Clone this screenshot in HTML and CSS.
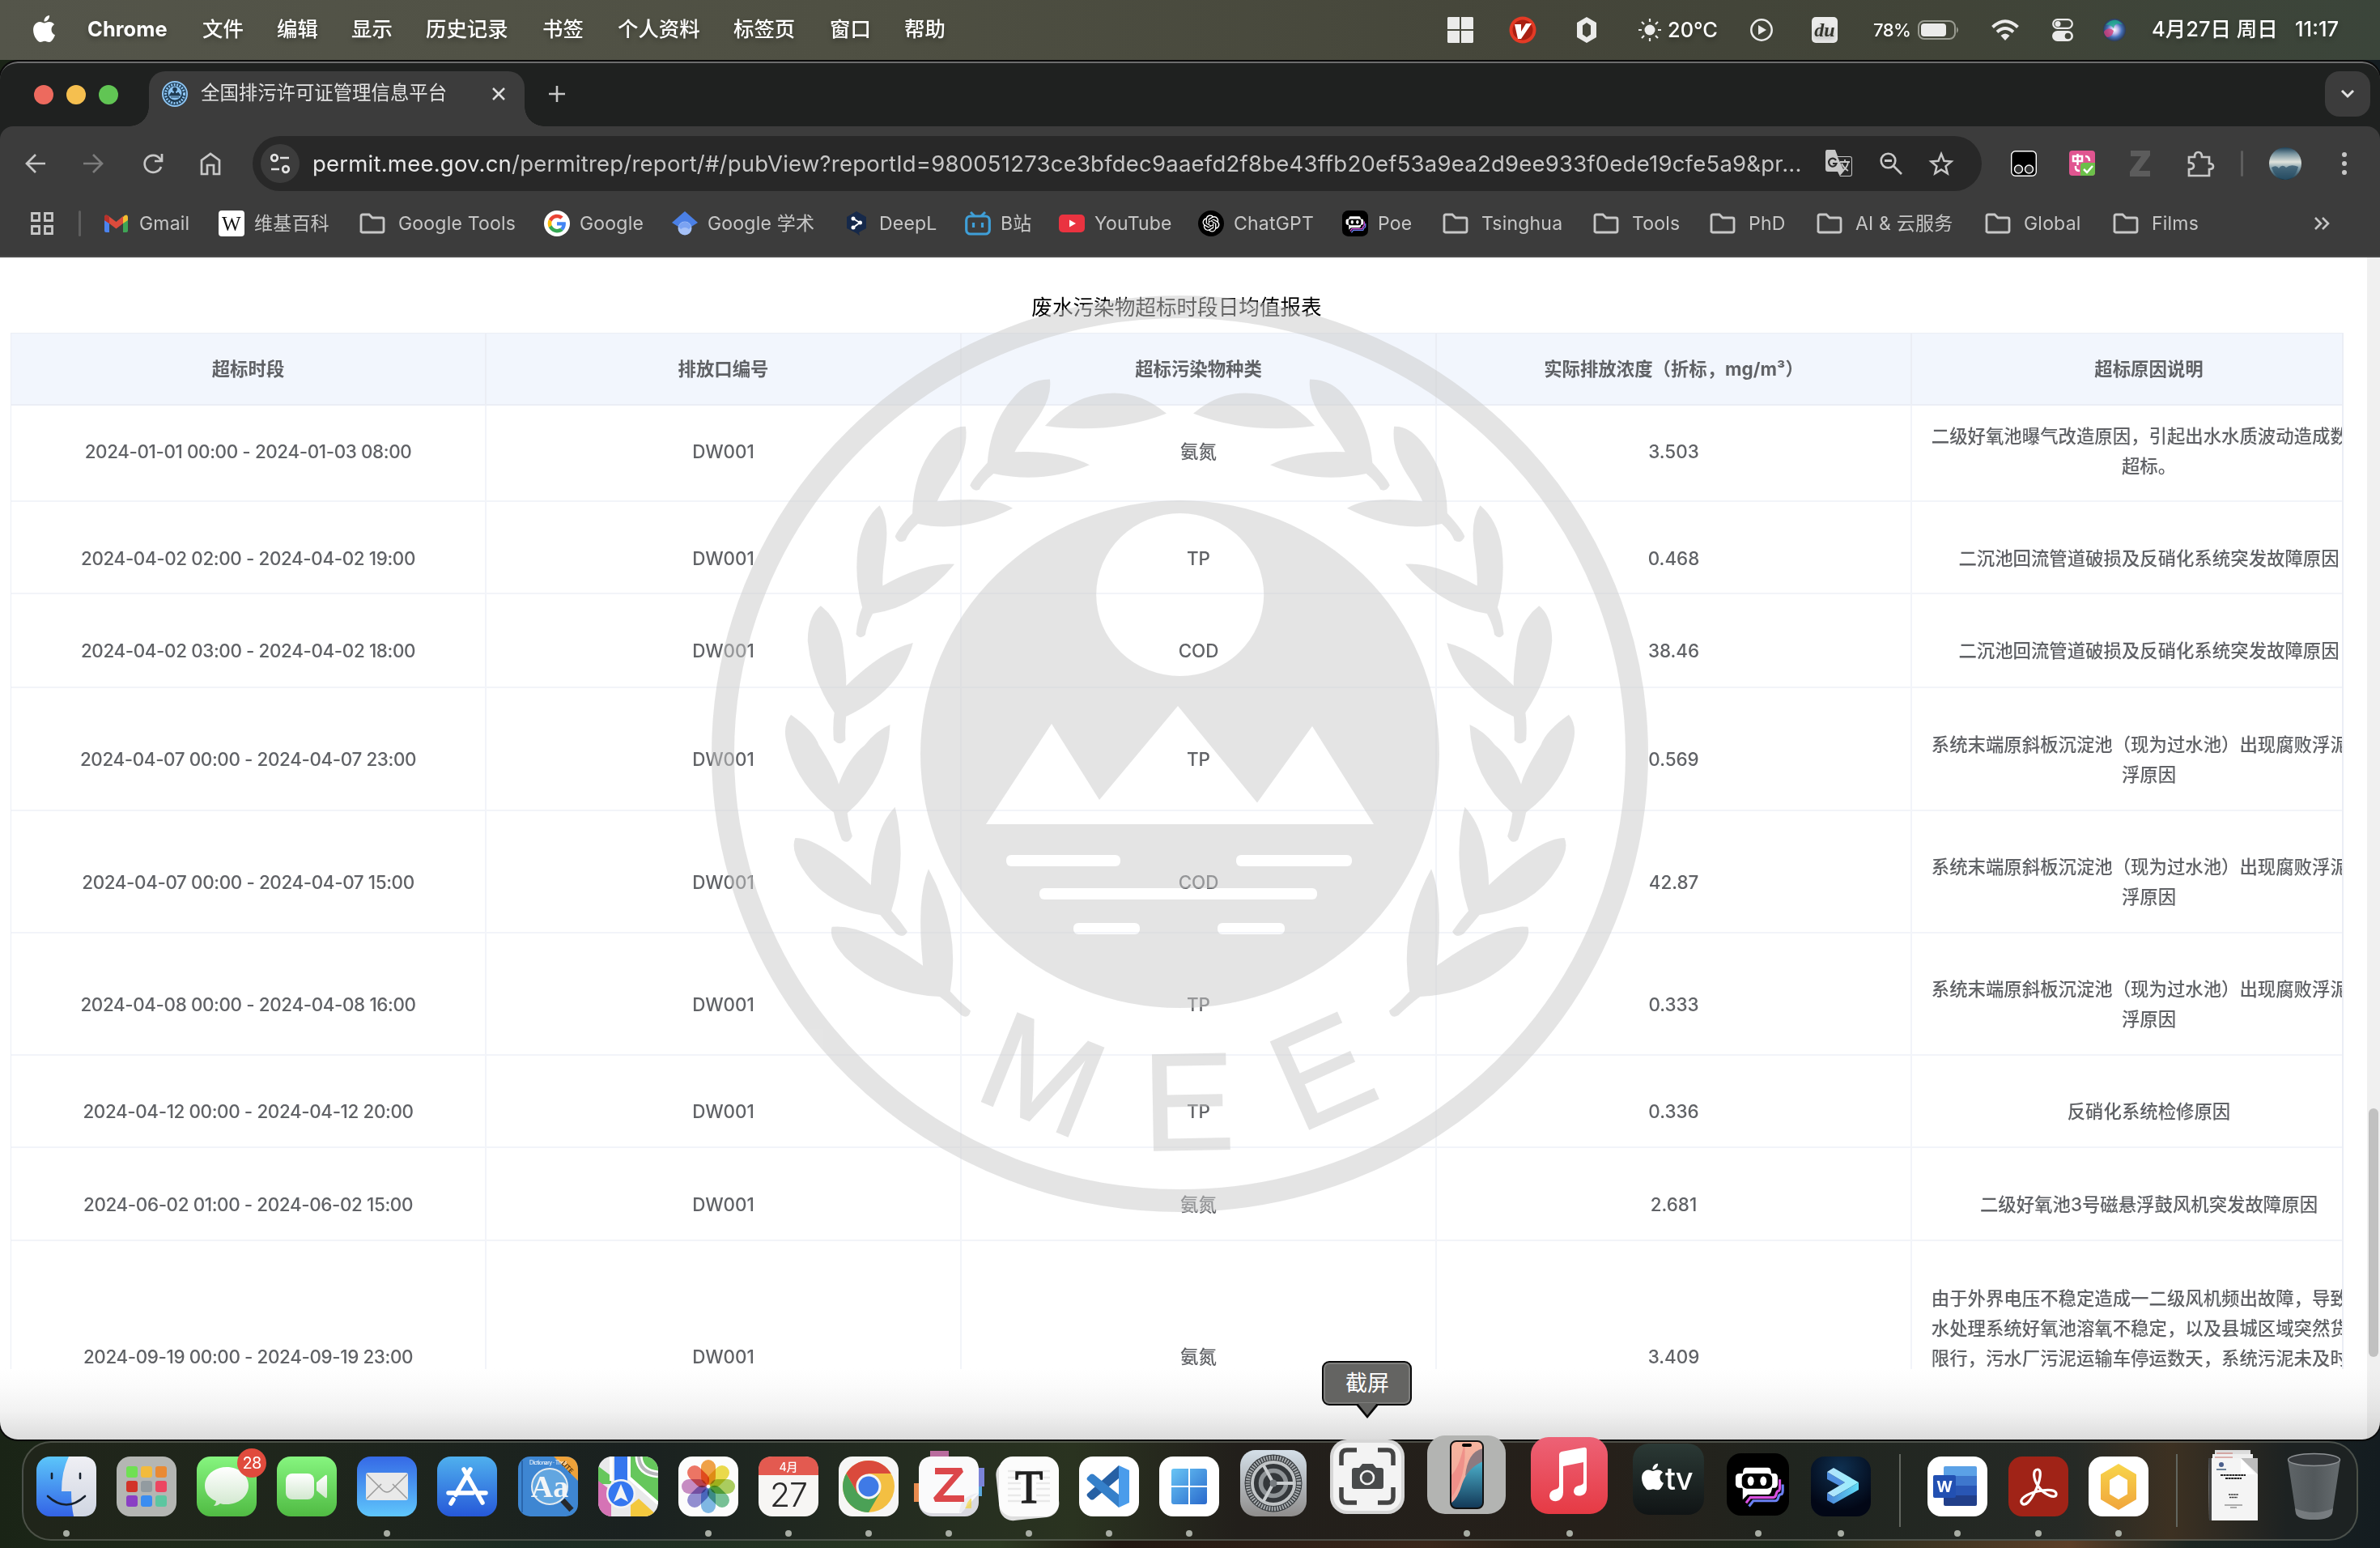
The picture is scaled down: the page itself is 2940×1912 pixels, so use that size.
FILE: index.html
```html
<!DOCTYPE html>
<html lang="zh-CN">
<head>
<meta charset="utf-8">
<title>全国排污许可证管理信息平台</title>
<link rel="stylesheet" href="styles.css">
</head>
<body>
<svg class="defs" width="0" height="0">
  <defs>
    <symbol id="folder" viewBox="0 0 32 32"><path d="M2 27V7q0-2 2-2h8l4 4h12q2 0 2 2v14q0 2-2 2H4q-2 0-2-2z" fill="none" stroke="#c7c7c7" stroke-width="2.8"/></symbol>
    <symbol id="apple" viewBox="0 0 24 24"><path d="M12.152 6.896c-.948 0-2.415-1.078-3.96-1.04-2.04.027-3.91 1.183-4.961 3.014-2.117 3.675-.546 9.103 1.519 12.09 1.013 1.454 2.208 3.09 3.792 3.039 1.52-.065 2.09-.987 3.935-.987 1.831 0 2.35.987 3.96.948 1.637-.026 2.676-1.48 3.676-2.948 1.156-1.688 1.636-3.325 1.662-3.415-.039-.013-3.182-1.221-3.22-4.857-.026-3.04 2.48-4.494 2.597-4.559-1.429-2.09-3.623-2.324-4.39-2.376-2-.156-3.675 1.09-4.61 1.09zM15.53 3.83c.843-1.012 1.4-2.427 1.245-3.83-1.207.052-2.662.805-3.532 1.818-.78.896-1.454 2.338-1.273 3.714 1.338.104 2.715-.688 3.559-1.701"/></symbol>
    <symbol id="poe" viewBox="0 0 74 74"><rect width="74" height="74" rx="17" fill="#000"/><path d="M26.500 63l5-6.500h26q3 0 4-5 1-3 4-3 1-1 1-4V37" fill="none" stroke="#6a80f2" stroke-width="3"/><path d="M23 59l5-6.500h27q3 0 4-5 1-3 3-3 1-1 1-4V31" fill="none" stroke="#d94fe0" stroke-width="3"/><path d="M23 17h26q3 0 3.500 4l.5 3h4q3 0 3.500 4v9q-.5 4-3.500 4h-3l-1 4q-1 4-4 4H25l-6 6v-13l-1-1h-3q-4 0-4.500-4v-9q.5-4 4.500-4h4l.5-3q.5-4 3.500-4z" fill="#fff"/><rect x="18" y="24" width="36" height="18" rx="6" fill="#000"/><ellipse cx="28.500" cy="33" rx="3.800" ry="5.500" fill="#fff"/><ellipse cx="43.500" cy="33" rx="3.800" ry="5.500" fill="#fff"/></symbol>
    <linearGradient id="gGreen" x2="0" y2="1"><stop stop-color="#86f57f"/><stop offset="1" stop-color="#50bb43"/></linearGradient>
    <linearGradient id="gMail" x2="0" y2="1"><stop stop-color="#3569e6"/><stop offset="1" stop-color="#5fc6fb"/></linearGradient>
    <linearGradient id="gStore" x2="0" y2="1"><stop stop-color="#4fb0ee"/><stop offset="1" stop-color="#2658d8"/></linearGradient>
    <linearGradient id="gFinder" x2="0" y2="1"><stop stop-color="#5cc6fa"/><stop offset="1" stop-color="#3363e6"/></linearGradient>
    <linearGradient id="gFace" x2="0" y2="1"><stop stop-color="#efeff4"/><stop offset="1" stop-color="#d0d6e2"/></linearGradient>
    <linearGradient id="gWhite" x2="0" y2="1"><stop stop-color="#fff"/><stop offset="1" stop-color="#d2e8cf"/></linearGradient>
    <linearGradient id="gMusic" x2="0" y2="1"><stop stop-color="#ed6276"/><stop offset="1" stop-color="#e63a44"/></linearGradient>
    <linearGradient id="gWin" x2="1" y2="1"><stop stop-color="#68c5f5"/><stop offset="1" stop-color="#2969cc"/></linearGradient>
    <linearGradient id="gSet" x2="0" y2="1"><stop stop-color="#d4dfe8"/><stop offset="1" stop-color="#8f8d8c"/></linearGradient>
    <linearGradient id="gTv" x2="0" y2="1"><stop stop-color="#2b3935"/><stop offset="1" stop-color="#101415"/></linearGradient>
    <linearGradient id="gSea" x2="0" y2="1"><stop stop-color="#4cb0cb"/><stop offset="1" stop-color="#103352"/></linearGradient>
    <linearGradient id="gCoral" x2="0" y2="1"><stop stop-color="#f6b59f"/><stop offset="1" stop-color="#f0a39b"/></linearGradient>
    <linearGradient id="gHex" x2="0" y2="1"><stop stop-color="#f8d54a"/><stop offset="1" stop-color="#f0a53c"/></linearGradient>
    <linearGradient id="gArrow" x2="1" y2="0"><stop stop-color="#b5e2fb"/><stop offset="1" stop-color="#92f0fd"/></linearGradient>
    <linearGradient id="gEdge" x2="1" y2="0"><stop stop-color="#4a83d8"/><stop offset="1" stop-color="#5fdcf5"/></linearGradient>
    <radialGradient id="gNavy" cx=".5" cy=".2" r=".7"><stop stop-color="#0f3050"/><stop offset="1" stop-color="#020716"/></radialGradient>
    <linearGradient id="gTrash" x2="1" y2="0"><stop stop-color="#5e6467"/><stop offset=".5" stop-color="#52585b"/><stop offset="1" stop-color="#666c6f"/></linearGradient>
    <linearGradient id="gCloud" x2="0" y2="1"><stop stop-color="#1d4159"/><stop offset=".2" stop-color="#7a95a0"/><stop offset=".45" stop-color="#dfe3dc"/><stop offset=".65" stop-color="#7f9daa"/><stop offset="1" stop-color="#12374b"/></linearGradient>
    <radialGradient id="gSiri"><stop stop-color="#fff"/><stop offset=".35" stop-color="#b8b5e8"/><stop offset=".65" stop-color="#4470b8"/><stop offset="1" stop-color="#2b3a58"/></radialGradient>
  </defs>
</svg>

<div class="desktop">
  <header class="menubar">
    <svg class="apple" width="33" height="33"><use href="#apple" fill="#fff"/></svg>
    <b>Chrome</b><span>文件</span><span>编辑</span><span>显示</span><span>历史记录</span><span>书签</span><span>个人资料</span><span>标签页</span><span>窗口</span><span>帮助</span>
    <svg width="32" height="32" viewBox="0 0 32 32"><path d="M1 0h14v15H0V1zM17 0h14l1 1v14H17zM0 17h15v15H1l-1-1zM17 17h15v14l-1 1H17z" fill="#ebebea"/></svg>
    <svg width="34" height="34" viewBox="0 0 34 34"><circle cx="17" cy="17" r="16.5" fill="#e43a25"/><circle cx="17" cy="17" r="12.5" fill="#a81f12"/><path d="M7 10h8l0 9 6-10h7L15 28h-4z" fill="#fff"/></svg>
    <svg width="24" height="32" viewBox="0 0 24 32"><path d="M12 0l12 7v18l-12 7L0 25V7zm0 7L7 10.500v11L12 25l5-3.500v-11z" fill="#ebebea" fill-rule="evenodd"/></svg>
    <div class="weather"><svg width="28" height="28" viewBox="0 0 28 28"><circle cx="14" cy="14" r="6.500" fill="#ebebea"/><path d="M14 0v4M14 24v4M0 14h4M24 14h4M4 4l3 3M21 21l3 3M4 24l3-3M21 7l3-3" stroke="#ebebea" stroke-width="2.200"/></svg><span>20°C</span></div>
    <svg width="28" height="28" viewBox="0 0 28 28"><circle cx="14" cy="14" r="12.700" fill="none" stroke="#ebebea" stroke-width="2.500"/><path d="M10 8l10 6-10 6z" fill="#ebebea"/></svg>
    <svg width="32" height="32" viewBox="0 0 32 32"><rect width="32" height="32" rx="5" fill="#ebebea"/><text x="16" y="24" text-anchor="middle" class="du">du</text></svg>
    <div class="battery"><span>78%</span><svg width="52" height="24" viewBox="0 0 52 24"><rect x="1" y="1" width="45" height="22" rx="7" fill="none" stroke="#999b91" stroke-width="2"/><rect x="4" y="4" width="31" height="16" rx="4" fill="#ebebea"/><path d="M48 8q4 4 0 8z" fill="#999b91"/></svg></div>
    <svg width="34" height="26" viewBox="0 0 34 26"><path d="M1.500 9.500q15.500-14.500 31 0M7 15.500q10-9 20 0" fill="none" stroke="#ebebea" stroke-width="4"/><path d="M11.500 20q5.500-5 11 0L17 26z" fill="#ebebea"/></svg>
    <svg width="26" height="28" viewBox="0 0 26 28"><rect x="1.200" y="1.200" width="23.600" height="10.600" rx="5.300" fill="none" stroke="#ebebea" stroke-width="2.200"/><circle cx="7" cy="6.500" r="3.500" fill="#ebebea"/><rect y="15" width="26" height="13" rx="6.500" fill="#ebebea"/><circle cx="19.500" cy="21.500" r="3.800" fill="#42453a"/></svg>
    <svg width="28" height="28" viewBox="0 0 28 28"><circle cx="14" cy="14" r="14" fill="url(#gSiri)"/><path d="M3 8Q14-4 24 7 14 4 13 12 8 6 3 8z" fill="#1fae8c" opacity=".8"/><path d="M1 16q6-7 12-1-2 8-8 8-4-3-4-7z" fill="#d23d78" opacity=".8"/></svg>
    <span class="date">4月27日 周日</span><span class="clock">11:17</span>
  </header>

  <main class="window">
    <div class="tabstrip">
      <div class="lights"><i class="red"></i><i class="yellow"></i><i class="green"></i></div>
      <div class="tab">
        <svg width="32" height="32" viewBox="0 0 32 32"><circle cx="16" cy="16" r="15" fill="#1f3b52" stroke="#8cc4f2" stroke-width="2"/><circle cx="16" cy="16" r="11.500" fill="none" stroke="#8cc4f2" stroke-width="3" stroke-dasharray="2 1.500"/><circle cx="16" cy="15" r="8.500" fill="#8cc4f2"/><circle cx="16" cy="10.500" r="2.800" fill="#1f3b52"/><path d="M9 18l3-4 2 2 2-3 2 3 2-2 3 4zM11 20h10" fill="#1f3b52" stroke="#1f3b52"/></svg>
        <span>全国排污许可证管理信息平台</span>
        <svg width="16" height="16" viewBox="0 0 16 16"><path d="M1 1l14 14M15 1L1 15" stroke="#dedede" stroke-width="2.500"/></svg>
      </div>
      <svg class="newtab" width="22" height="22" viewBox="0 0 22 22"><path d="M11 1v20M1 11h20" stroke="#c7c7c7" stroke-width="2.600"/></svg>
      <div class="tabsearch"><svg width="18" height="12" viewBox="0 0 18 12"><path d="M2 2l7 7 7-7" fill="none" stroke="#e3e3e3" stroke-width="3"/></svg></div>
    </div>

    <div class="chrome">
      <div class="toolbar">
        <svg width="26" height="26" viewBox="0 0 26 26"><path d="M25 13H3M13 2L2 13l11 11" fill="none" stroke="#c7c7c7" stroke-width="2.700"/></svg>
        <svg width="26" height="26" viewBox="0 0 26 26"><path d="M1 13h22M13 2l11 11-11 11" fill="none" stroke="#7c7c7c" stroke-width="2.700"/></svg>
        <svg width="26" height="26" viewBox="0 0 26 26"><path d="M23 17A10.500 10.500 0 1 1 21.500 7L24 10M24 1v9h-9" fill="none" stroke="#c7c7c7" stroke-width="2.700"/></svg>
        <svg width="26" height="30" viewBox="0 0 26 30"><path d="M2 28V11L13 3l11 8v17h-7V17H9v11z" fill="none" stroke="#c7c7c7" stroke-width="2.700"/></svg>
        <div class="omnibox">
          <div class="siteinfo"><svg width="26" height="26" viewBox="0 0 26 26"><g fill="none" stroke="#e3e3e3" stroke-width="2.700"><circle cx="6" cy="6" r="3.800"/><path d="M13 6h11M2 20h10"/><circle cx="20" cy="20" r="3.800"/></g></svg></div>
          <div class="url"><b>permit.mee.gov.cn</b>/permitrep/report/#/pubView?reportId=980051273ce3bfdec9aaefd2f8be43ffb20ef53a9ea2d9ee933f0ede19cfe5a9&amp;pr...</div>
          <svg width="34" height="34" viewBox="0 0 34 34"><path d="M2 0h10l3 8h15q3 0 3 3v19q0 3-3 3H18l-3-6H3q-3 0-3-3V3q0-3 2-3z" fill="#c7c7c7"/><path d="M15 9h15q2 0 2 2v19q0 2-2 2H18l5-6z" fill="#282828"/><path d="M18 15h12M24 12v3M21 26q6-4 7-11M20 17q3 6 8 9" stroke="#c7c7c7" stroke-width="1.800" fill="none"/><path d="M13 13a4.800 5 0 1 0 .5 4H9" fill="none" stroke="#282828" stroke-width="2.200"/></svg>
          <svg width="28" height="28" viewBox="0 0 28 28"><path d="M17 17l10 10M6 10.500h9" stroke="#c7c7c7" stroke-width="2.800"/><circle cx="10.500" cy="10.500" r="8.800" fill="none" stroke="#c7c7c7" stroke-width="2.600"/></svg>
          <svg width="30" height="30" viewBox="0 0 30 30"><path d="M15 3l3.500 8.700 9 .7-7 6 2.200 8.900L15 22.500l-7.700 4.800 2.200-8.900-7-6 9-.7z" fill="none" stroke="#c7c7c7" stroke-width="2.500"/></svg>
        </div>
        <svg width="32" height="32" viewBox="0 0 32 32"><rect x=".7" y=".7" width="30.600" height="30.600" rx="5" fill="#000" stroke="#fff" stroke-width="1.400"/><circle cx="9.500" cy="23" r="5" fill="#333" stroke="#fff" stroke-width="1.500"/><circle cx="22.500" cy="23" r="5" fill="#333" stroke="#fff" stroke-width="1.500"/></svg>
        <svg width="32" height="32" viewBox="0 0 32 32"><rect width="32" height="31" rx="4" fill="#e05590"/><path d="M5 7h11v6H5zM10.500 4v14M20 7q5 0 5 6M8 19v2q0 4 5 4" fill="none" stroke="#fff" stroke-width="2.500"/><path d="M14 19q0-4 4-4h14v12q0 4-4 4H14z" fill="#6cc04a"/><path d="M18 23l4 4 7-8" stroke="#fff" stroke-width="2.500" fill="none"/></svg>
        <svg width="26" height="32" viewBox="0 0 26 32"><path d="M1 0h24v6L11 25h14v7H0v-6L14 7H1z" fill="#5c5c5c"/></svg>
        <svg width="33" height="33" viewBox="0 0 33 33"><path d="M2 8h7q0-6 4.500-6T18 8h9v8q5 0 5 3.500T27 23v8H2v-8q6 0 6-4t-6-4z" fill="none" stroke="#c7c7c7" stroke-width="2.700"/></svg>
        <i class="sep"></i>
        <svg width="40" height="40" viewBox="0 0 40 40"><circle cx="20" cy="20" r="20" fill="url(#gCloud)"/><path d="M3 25q6-4 9 1 4-6 9-1 6-5 15-1-3 14-16 16Q7 38 3 25z" fill="#2c5268" opacity=".75"/></svg>
        <svg width="6" height="30" viewBox="0 0 6 30"><g fill="#c7c7c7"><circle cx="3" cy="4" r="3"/><circle cx="3" cy="15" r="3"/><circle cx="3" cy="26" r="3"/></g></svg>
      </div>
      <nav class="bookmarks">
        <svg width="28" height="28" viewBox="0 0 28 28"><g fill="none" stroke="#c7c7c7" stroke-width="2.800"><path d="M1.500 1.500h9v9h-9zM17.500 1.500h9v9h-9zM1.500 17.500h9v9h-9zM17.500 17.500h9v9h-9z"/></g></svg>
        <i class="sep"></i>
        <a><svg width="32" height="32" viewBox="0 0 32 32"><path d="M1 9v16q0 2 2 2h4V13z" fill="#4b83ee"/><path d="M30 9v16q0 2-2 2h-4V13z" fill="#3fa556"/><path d="M24 8l2-2q4-2 4 3v3l-6 4z" fill="#f3bd31"/><path d="M1 12V9q0-5 4-3l10.500 8L24 7v9l-8.500 6.500L7 16z" fill="#dc4b3c"/><path d="M1 12V9q0-4 4-3l2 2v8z" fill="#b8302a"/></svg>Gmail</a>
        <a><svg width="32" height="32" viewBox="0 0 32 32"><rect width="32" height="32" rx="4" fill="#fff"/><text x="16" y="25" text-anchor="middle" class="wiki">W</text></svg>维基百科</a>
        <a class="f"><svg width="32" height="32"><use href="#folder"/></svg>Google Tools</a>
        <a><svg width="32" height="32" viewBox="0 0 48 48"><circle cx="24" cy="24" r="24" fill="#fff"/><g transform="translate(7 7) scale(.71)"><path fill="#EA4335" d="M24 9.500c3.540 0 6.710 1.220 9.210 3.600l6.850-6.850C35.900 2.380 30.470 0 24 0 14.620 0 6.510 5.380 2.560 13.220l7.980 6.190C12.430 13.720 17.740 9.500 24 9.500z"/><path fill="#4285F4" d="M46.980 24.550c0-1.570-.15-3.090-.38-4.550H24v9.020h12.940c-.58 2.960-2.260 5.480-4.780 7.180l7.730 6c4.510-4.180 7.090-10.360 7.090-17.650z"/><path fill="#FBBC05" d="M10.530 28.590c-.48-1.450-.76-2.990-.76-4.590s.27-3.140.76-4.590l-7.980-6.190C.92 16.460 0 20.120 0 24c0 3.880.92 7.540 2.560 10.780l7.970-6.190z"/><path fill="#34A853" d="M24 48c6.480 0 11.930-2.130 15.890-5.810l-7.730-6c-2.150 1.450-4.920 2.300-8.160 2.300-6.260 0-11.570-4.220-13.470-9.910l-7.980 6.190C6.510 42.620 14.620 48 24 48z"/></g></svg>Google</a>
        <a><svg width="32" height="32" viewBox="0 0 32 32"><path d="M16 1L0 15l8 5h16l8-5z" fill="#4b80e6"/><circle cx="16" cy="22" r="8.500" fill="#a5c1f8"/><path d="M8 20q3-6 8-6t8 6l-3 3q-5-4-10 0z" fill="#7ba3f2"/></svg>Google 学术</a>
        <a><svg width="32" height="32" viewBox="0 0 32 32"><path d="M16 1l12 7v14l-9 5 1 4-4-3L4 22V8z" fill="#16294a"/><path d="M12 10l8 5-8 6" fill="none" stroke="#fff" stroke-width="2"/><circle cx="12" cy="10" r="2.500" fill="#fff"/><circle cx="20.500" cy="15" r="2.500" fill="#fff"/><circle cx="12" cy="21" r="2.500" fill="#fff"/></svg>DeepL</a>
        <a><svg width="32" height="32" viewBox="0 0 32 32"><rect x="1.700" y="7" width="28.600" height="22" rx="5" fill="none" stroke="#3f9fd8" stroke-width="3.200"/><path d="M7 2l5 5M25 2l-5 5" stroke="#3f9fd8" stroke-width="3"/><path d="M10.500 15v6M21.500 15v6" stroke="#3f9fd8" stroke-width="3.200"/></svg>B站</a>
        <a><svg width="32" height="32" viewBox="0 0 32 32"><rect y="5" width="32" height="22" rx="5" fill="#ea3340"/><path d="M13 11.500l8 4.500-8 4.500z" fill="#fff"/></svg>YouTube</a>
        <a><svg width="32" height="32" viewBox="0 0 32 32"><circle cx="16" cy="16" r="16" fill="#000"/><path transform="translate(5.500 5.500) scale(.875)" fill="#fff" d="M22.2819 9.8211a5.9847 5.9847 0 0 0-.5157-4.9108 6.0462 6.0462 0 0 0-6.5098-2.9A6.0651 6.0651 0 0 0 4.9807 4.1818a5.9847 5.9847 0 0 0-3.9977 2.9 6.0462 6.0462 0 0 0 .7427 7.0966 5.98 5.98 0 0 0 .511 4.9107 6.051 6.051 0 0 0 6.5146 2.9001A5.9847 5.9847 0 0 0 13.2599 24a6.0557 6.0557 0 0 0 5.7718-4.2058 5.9894 5.9894 0 0 0 3.9977-2.9001 6.0557 6.0557 0 0 0-.7475-7.0729zm-9.022 12.6081a4.4755 4.4755 0 0 1-2.8764-1.0408l.1419-.0804 4.7783-2.7582a.7948.7948 0 0 0 .3927-.6813v-6.7369l2.02 1.1686a.071.071 0 0 1 .038.052v5.5826a4.504 4.504 0 0 1-4.4945 4.4944zm-9.6607-4.1254a4.4708 4.4708 0 0 1-.5346-3.0137l.142.0852 4.783 2.7582a.7712.7712 0 0 0 .7806 0l5.8428-3.3685v2.3324a.0804.0804 0 0 1-.0332.0615L9.74 19.9502a4.4992 4.4992 0 0 1-6.1408-1.6464zM2.3408 7.8956a4.485 4.485 0 0 1 2.3655-1.9728V11.6a.7664.7664 0 0 0 .3879.6765l5.8144 3.3543-2.0201 1.1685a.0757.0757 0 0 1-.071 0l-4.8303-2.7865A4.504 4.504 0 0 1 2.3408 7.872zm16.5963 3.8558L13.1038 8.364 15.1192 7.2a.0757.0757 0 0 1 .071 0l4.8303 2.7913a4.4944 4.4944 0 0 1-.6765 8.1042v-5.6772a.79.79 0 0 0-.407-.667zm2.0107-3.0231l-.142-.0852-4.7735-2.7818a.7759.7759 0 0 0-.7854 0L9.409 9.2297V6.8974a.0662.0662 0 0 1 .0284-.0615l4.8303-2.7866a4.4992 4.4992 0 0 1 6.6802 4.66zM8.3065 12.863l-2.02-1.1638a.0804.0804 0 0 1-.038-.0567V6.0742a4.4992 4.4992 0 0 1 7.3757-3.4537l-.142.0805L8.704 5.459a.7948.7948 0 0 0-.3927.6813zm1.0976-2.3654l2.602-1.4998 2.6069 1.4998v2.9994l-2.5974 1.4997-2.6067-1.4997Z"/></svg>ChatGPT</a>
        <a><svg width="32" height="32"><use href="#poe"/></svg>Poe</a>
        <a class="f"><svg width="32" height="32"><use href="#folder"/></svg>Tsinghua</a>
        <a class="f"><svg width="32" height="32"><use href="#folder"/></svg>Tools</a>
        <a class="f"><svg width="32" height="32"><use href="#folder"/></svg>PhD</a>
        <a class="f"><svg width="32" height="32"><use href="#folder"/></svg>AI &amp; 云服务</a>
        <a class="f"><svg width="32" height="32"><use href="#folder"/></svg>Global</a>
        <a class="f"><svg width="32" height="32"><use href="#folder"/></svg>Films</a>
        <svg width="20" height="18" viewBox="0 0 20 18"><path d="M2 2l7 7-7 7M11 2l7 7-7 7" fill="none" stroke="#c7c7c7" stroke-width="2.600"/></svg>
      </nav>
    </div>

    <section class="page">
      <div class="report">
        <h1>废水污染物超标时段日均值报表</h1>
        <div class="tablebox">
          <table>
            <thead><tr><th>超标时段</th><th>排放口编号</th><th>超标污染物种类</th><th>实际排放浓度（折标，mg/m³）</th><th>超标原因说明</th></tr></thead>
            <tbody>
              <tr class="first"><td>2024-01-01 00:00 - 2024-01-03 08:00</td><td>DW001</td><td>氨氮</td><td>3.503</td><td>二级好氧池曝气改造原因，引起出水水质波动造成数据<br>超标。</td></tr>
              <tr class="one"><td>2024-04-02 02:00 - 2024-04-02 19:00</td><td>DW001</td><td>TP</td><td>0.468</td><td>二沉池回流管道破损及反硝化系统突发故障原因</td></tr>
              <tr class="one tall"><td>2024-04-02 03:00 - 2024-04-02 18:00</td><td>DW001</td><td>COD</td><td>38.46</td><td>二沉池回流管道破损及反硝化系统突发故障原因</td></tr>
              <tr class="two tall"><td>2024-04-07 00:00 - 2024-04-07 23:00</td><td>DW001</td><td>TP</td><td>0.569</td><td>系统末端原斜板沉淀池（现为过水池）出现腐败浮泥上<br>浮原因</td></tr>
              <tr class="two"><td>2024-04-07 00:00 - 2024-04-07 15:00</td><td>DW001</td><td>COD</td><td>42.87</td><td>系统末端原斜板沉淀池（现为过水池）出现腐败浮泥上<br>浮原因</td></tr>
              <tr class="two"><td>2024-04-08 00:00 - 2024-04-08 16:00</td><td>DW001</td><td>TP</td><td>0.333</td><td>系统末端原斜板沉淀池（现为过水池）出现腐败浮泥上<br>浮原因</td></tr>
              <tr class="one"><td>2024-04-12 00:00 - 2024-04-12 20:00</td><td>DW001</td><td>TP</td><td>0.336</td><td>反硝化系统检修原因</td></tr>
              <tr class="one tall"><td>2024-06-02 01:00 - 2024-06-02 15:00</td><td>DW001</td><td>氨氮</td><td>2.681</td><td>二级好氧池3号磁悬浮鼓风机突发故障原因</td></tr>
              <tr class="many"><td>2024-09-19 00:00 - 2024-09-19 23:00</td><td>DW001</td><td>氨氮</td><td>3.409</td><td class="reason">由于外界电压不稳定造成一二级风机频出故障，导致污<br>水处理系统好氧池溶氧不稳定，以及县城区域突然货车<br>限行，污水厂污泥运输车停运数天，系统污泥未及时外</td></tr>
            </tbody>
          </table>
        </div>
      </div>
      <svg class="emblem" width="1160" height="1136" viewBox="878 364 1160 1136">
        <mask id="scene">
          <rect x="1100" y="600" width="720" height="680" fill="#fff"/>
          <ellipse cx="1457.700" cy="734.500" rx="103.500" ry="100.500" fill="#000"/>
          <path d="M1218 1018l81-124 59 94 97-116 98 119.500 68-94.500 76 121z" fill="#000"/>
          <g fill="#000"><rect x="1243" y="1056" width="141" height="14" rx="6"/><rect x="1527" y="1056" width="143" height="14" rx="6"/><rect x="1284" y="1097" width="343" height="14" rx="6"/><rect x="1326" y="1140" width="82" height="14" rx="6"/><rect x="1504" y="1140" width="83" height="14" rx="6"/></g>
        </mask>
        <g opacity=".5" fill="#cbcbcb">
          <ellipse cx="1457.500" cy="931" rx="564.500" ry="552" fill="none" stroke="#cbcbcb" stroke-width="28"/>
          <ellipse cx="1457.500" cy="931.500" rx="320.500" ry="313.500" mask="url(#scene)"/>
          <g transform="translate(860 340) scale(.7653 .3827)">
            <g id="wreath">
              <path d="M563 486Q610 380 675 380 720 380 759 446 670 515 563 486z"/>
              <path d="M571 336Q575 400 545 478 522 540 514 570 590 565 635 612 560 675 480 640 462 670 457 692 448 700 442 678 445 660 470 605 475 480 510 400 535 335 571 336z"/>
              <path d="M435 488Q440 560 415 640 395 700 389 730 480 710 511 752 430 835 358 802 342 830 338 855 326 870 321 843 325 820 349 768 350 640 385 550 410 485 435 488z"/>
              <path d="M296 743Q312 790 306 880 300 960 301 1002 370 925 417 932 360 1070 285 1092 275 1130 273 1160 265 1178 258 1158 260 1110 268 1072 255 980 261 880 268 790 296 743z"/>
              <path d="M201 1067Q235 1120 238 1220 243 1290 242 1325 300 1210 350 1186 330 1340 242 1424 240 1460 241 1500 232 1522 222 1500 220 1450 223 1412 185 1300 180 1180 180 1100 201 1067z"/>
              <path d="M153 1418Q190 1470 198 1516 225 1600 230 1643 245 1560 272 1516 290 1470 313 1450 310 1620 244 1736 247 1780 252 1810 245 1840 235 1822 225 1770 222 1734 160 1640 145 1500 140 1450 153 1418z"/>
              <path d="M160 1816Q200 1815 282 1968 285 1790 321 1716 342 1890 315 2051 330 2085 341 2118 335 2142 323 2126 308 2090 297 2064 210 2040 170 1910 152 1850 160 1816z"/>
              <path d="M219 2103Q270 2090 366 2228 355 2010 375 1916 428 2110 410 2311 425 2345 443 2374 440 2402 428 2388 408 2350 393 2328 300 2320 240 2200 213 2140 219 2103z"/>
            </g>
            <use href="#wreath" transform="translate(1561.500 0) scale(-1 1)"/>
          </g>
          <g class="mee" text-anchor="middle">
            <text transform="translate(1266 1382) rotate(22)">M</text>
            <text transform="translate(1469 1420) rotate(-1)">E</text>
            <text transform="translate(1657 1377) rotate(-24)">E</text>
          </g>
        </g>
      </svg>
      <div class="scrollbar"><i></i></div>
    </section>
  </main>

  <footer class="dock">
    <div class="app run"><svg viewBox="0 0 74 74"><rect width="74" height="74" rx="17" fill="url(#gFinder)"/><path d="M40 0h17q17 0 17 17v40q0 17-17 17H46q-3-14-3-31H31Q31 18 40 0z" fill="url(#gFace)"/><path d="M19 21v6M54 21v6M14 49q23 21 46 0" fill="none" stroke="#16202c" stroke-width="2.600" stroke-linecap="round"/></svg></div>
    <div class="app"><svg viewBox="0 0 74 74"><rect width="74" height="74" rx="17" fill="#b4b6b3"/><rect x="12" y="12" width="14" height="14" rx="3" fill="#6fe053"/><rect x="30" y="12" width="14" height="14" rx="3" fill="#f2bb3d"/><rect x="48" y="12" width="14" height="14" rx="3" fill="#e98a33"/><rect x="12" y="30" width="14" height="14" rx="3" fill="#d23429"/><rect x="30" y="30" width="14" height="14" rx="3" fill="#929ba0"/><rect x="48" y="30" width="14" height="14" rx="3" fill="#ec4761"/><rect x="12" y="48" width="14" height="14" rx="3" fill="#8a3fc4"/><rect x="30" y="48" width="14" height="14" rx="3" fill="#3b8df0"/><rect x="48" y="48" width="14" height="14" rx="3" fill="#5cc6a0"/></svg></div>
    <div class="app"><svg viewBox="0 0 74 74"><rect width="74" height="74" rx="17" fill="url(#gGreen)"/><path d="M37 13c15 0 27 10 27 23S52 59 37 59c-3 0-6 0-8-1q-3 3-8 3 3-3 3-6C15 51 10 45 10 36c0-13 12-23 27-23z" fill="url(#gWhite)"/></svg><span class="badge">28</span></div>
    <div class="app"><svg viewBox="0 0 74 74"><rect width="74" height="74" rx="17" fill="url(#gGreen)"/><rect x="11" y="21" width="35" height="32" rx="8" fill="url(#gWhite)"/><path d="M49 32l11-9q2-1 2 2v24q0 3-2 2l-11-9z" fill="url(#gWhite)"/></svg></div>
    <div class="app run"><svg viewBox="0 0 74 74"><rect width="74" height="74" rx="17" fill="url(#gMail)"/><rect x="11" y="20" width="52" height="34" rx="3" fill="#e9e9e9"/><path d="M12 52l18-18M62 52L44 34M12 22l20 20q5 4 10 0l20-20" fill="none" stroke="#9a9a9a" stroke-width="1.500"/></svg></div>
    <div class="app"><svg viewBox="0 0 74 74"><rect width="74" height="74" rx="17" fill="url(#gStore)"/><path d="M41 16L23 47M33 16l23 41M14 45h30M52 45h8M20 53l-3 5" stroke="#fff" stroke-width="5.500" stroke-linecap="round"/></svg></div>
    <div class="app"><svg viewBox="0 0 74 74"><rect width="74" height="74" rx="15" fill="#3e86d2"/><path d="M5 5v64" stroke="#2a66ac" stroke-width="2"/><path d="M44 0h13q17 0 17 17v13z" fill="#eea23a"/><text x="14" y="10" class="tiny">Dictionary · Thes</text><text class="lite" transform="translate(53 9) rotate(46)">LITE</text><circle cx="39" cy="37" r="22" fill="#62a6e0" stroke="#e4ebf0" stroke-width="2"/><text x="39" y="50" text-anchor="middle" class="aa">Aa</text><path d="M55 54l11 12" stroke="#26282b" stroke-width="7"/></svg></div>
    <div class="app"><svg viewBox="0 0 74 74"><clipPath id="mapClip"><rect width="74" height="74" rx="17"/></clipPath><g clip-path="url(#mapClip)"><rect width="74" height="74" fill="#e9e9ea"/><path d="M36 0h38v56L36 26z" fill="#66c75c"/><path d="M0 12l16 12v10H0z" fill="#66c75c"/><path d="M0 30l16 12v32H0z" fill="#d573b5"/><path d="M40 74V60l10-8 24 22z" fill="#f3c83e"/><path d="M74 22Q50 20 50-2" fill="none" stroke="#fff" stroke-width="9"/><path d="M74 22Q50 20 50-2" fill="none" stroke="#b7b7bb" stroke-width="4"/><path d="M20 0h16v36H20z" fill="#3576ee"/><path d="M16 0v30M38 0v26l36 32" stroke="#fff" stroke-width="4" fill="none"/><circle cx="28" cy="46" r="18" fill="#f4f4f4"/><circle cx="28" cy="46" r="15.500" fill="#3577f0"/><path d="M28 34l9 22-9-5-9 5z" fill="#f4f4f4"/></g></svg></div>
    <div class="app run"><svg viewBox="0 0 74 74"><rect width="74" height="74" rx="17" fill="#fcfcfc"/><g class="petals"><rect x="28" y="4" width="18" height="31" rx="9" fill="#f19b38"/><rect x="28" y="4" width="18" height="31" rx="9" fill="#ecd93c" transform="rotate(45 37 37)"/><rect x="28" y="4" width="18" height="31" rx="9" fill="#a5cb52" transform="rotate(90 37 37)"/><rect x="28" y="4" width="18" height="31" rx="9" fill="#6cbe8e" transform="rotate(135 37 37)"/><rect x="28" y="4" width="18" height="31" rx="9" fill="#76b3e4" transform="rotate(180 37 37)"/><rect x="28" y="4" width="18" height="31" rx="9" fill="#8b87cf" transform="rotate(225 37 37)"/><rect x="28" y="4" width="18" height="31" rx="9" fill="#c584c0" transform="rotate(270 37 37)"/><rect x="28" y="4" width="18" height="31" rx="9" fill="#ee6a58" transform="rotate(315 37 37)"/></g></svg></div>
    <div class="app run"><svg viewBox="0 0 74 74"><rect width="74" height="74" rx="17" fill="#f7f6f4"/><path d="M0 23v-6Q0 0 17 0h40q17 0 17 17v6z" fill="#e35a50"/><text x="37" y="18" text-anchor="middle" class="calm">4月</text><text x="37" y="62" text-anchor="middle" class="cald">27</text></svg></div>
    <div class="app run"><svg viewBox="0 0 74 74"><rect width="74" height="74" rx="17" fill="#f6f6f5"/><circle cx="37" cy="37" r="32" fill="#f3bf42"/><path d="M9.300 21A32 32 0 0 1 64.700 21H37L23 45z" fill="#da4a3c"/><path d="M9.300 21A32 32 0 0 0 37 69l14-24-14 8-14-8z" fill="#4ba156"/><circle cx="37" cy="37" r="15.500" fill="#f6f6f5"/><circle cx="37" cy="37" r="12.500" fill="#3f7ae6"/></svg></div>
    <div class="app run"><svg viewBox="0 0 74 74"><path d="M-6 33h8v23h-8z" fill="#e88b4e"/><path d="M14-7h23V4H14z" fill="#b96c9e"/><path d="M70 14h11v23H70z" fill="#7a83d8"/><path d="M70 37h8v12h-8z" fill="#5aa7dd"/><rect width="74" height="74" rx="17" fill="#d9d9e0"/><path d="M17 0h40q17 0 17 17v29L52 70H17Q0 70 0 53V17Q0 0 17 0z" fill="#fafafb"/><path d="M57 52h8v12h-12z" fill="#f0d13c" opacity=".7"/><path d="M50 70q1-22 24-25-9 4-14 12-3 11-10 13z" fill="#ececf1"/><path d="M20 14h33l2 5-25 29h26v8H20l-2-5 25-29H20z" fill="#dc474a"/></svg></div>
    <div class="app run"><svg viewBox="0 0 74 74"><rect x="-2" y="3" width="74" height="74" rx="17" fill="#dfdfdf" transform="rotate(-6 37 37)"/><rect width="74" height="74" rx="17" fill="#fcfcfc"/><path d="M11 18h52M11 26h52M11 33h52M11 40h52M11 48h52M11 55h52" stroke="#e9e9e9" stroke-width="2.600"/><rect x="27" y="14" width="19" height="45" fill="#fcfcfc"/><text x="37" y="57" text-anchor="middle" class="typora">T</text></svg></div>
    <div class="app run"><svg viewBox="0 0 74 74"><rect width="74" height="74" rx="17" fill="#fff"/><path d="M49 11l13 6v40l-13 6z" fill="#4a9ceb"/><path d="M49 11v16L18 53q-2 1-4 0l-4-4q-1-2 0-3z" fill="#2660a4"/><path d="M49 63V47L18 22q-2-1-4 0l-4 4q-1 2 0 3z" fill="#3580ca"/></svg></div>
    <div class="app run"><svg viewBox="0 0 74 74"><rect width="74" height="74" rx="17" fill="#fff"/><path d="M18 15h18v21H15V18q0-3 3-3zM38 15h18q3 0 3 3v18H38zM15 38h21v21H18q-3 0-3-3zM38 38h21v18q0 3-3 3H38z" fill="url(#gWin)"/></svg></div>
    <div class="app s82"><svg viewBox="0 0 74 74"><rect width="74" height="74" rx="17" fill="url(#gSet)"/><circle cx="37" cy="37" r="32" fill="#34383b"/><circle cx="37" cy="37" r="28.500" fill="none" stroke="#a5aaad" stroke-width="5" stroke-dasharray="1.800 1.200"/><circle cx="37" cy="37" r="23.500" fill="none" stroke="#c0c4c6" stroke-width="3.500"/><circle cx="37" cy="37" r="14" fill="none" stroke="#8f9497" stroke-width="5"/><path d="M37 37h23M37 37L26 17M37 37L26 57" stroke="#c9cdcf" stroke-width="3.500"/><circle cx="37" cy="37" r="4" fill="#777c80"/></svg></div>
    <div class="app s92"><div class="tip">截屏</div><svg viewBox="0 0 92 92"><rect width="92" height="92" rx="21" fill="#d6d6d6"/><rect x="4" y="4" width="84" height="84" rx="18" fill="#f3f3f3"/><path d="M14 32V20q0-7 7-7h12M59 13h12q7 0 7 7v12M14 59v12q0 7 7 7h12M59 78h12q7 0 7-7V59" fill="none" stroke="#444" stroke-width="5.500"/><path d="M30 35h6l4-5h13l4 5h6q3 0 3 3v20q0 3-3 3H30q-3 0-3-3V38q0-3 3-3z" fill="#484a4b"/><circle cx="46" cy="47" r="8" fill="none" stroke="#f3f3f3" stroke-width="2.600"/></svg></div>
    <div class="app s97 run"><svg viewBox="0 0 97 97"><rect width="97" height="97" rx="22" fill="#b3b4b2"/><clipPath id="screen"><rect x="29" y="7" width="40" height="83" rx="7"/></clipPath><g clip-path="url(#screen)"><rect x="29" y="7" width="40" height="83" fill="url(#gCoral)"/><path d="M69 16Q50 20 47 50l22-16z" fill="#8d7a80"/><path d="M46 8Q50 50 29 78V50Q40 40 46 8z" fill="#ee8a84" opacity=".8"/><path d="M69 32Q50 40 43 60 38 78 29 84v8h40z" fill="url(#gSea)"/></g><rect x="29" y="7" width="40" height="83" rx="7" fill="none" stroke="#111" stroke-width="2"/><rect x="43" y="10" width="12" height="4" rx="2" fill="#000"/></svg></div>
    <div class="app s95 run"><svg viewBox="0 0 95 95"><rect width="95" height="95" rx="22" fill="url(#gMusic)"/><path d="M35 22q0-3 3-4l27-5q4-1 4 3v47q0 7-6 9-8 2-10-4 0-7 6-8 6-1 6-4V31l-25 5v32q0 9-8 11-8 1-9-6 0-6 6-8 6-1 6-5z" fill="#fff"/></svg></div>
    <div class="app s88"><svg viewBox="0 0 88 88"><rect width="88" height="88" rx="20" fill="url(#gTv)"/><svg x="8" y="24" width="33" height="34" viewBox="0 0 24 24"><use href="#apple" fill="#fff"/></svg><text x="40" y="57" class="tv">tv</text></svg></div>
    <div class="app s77 run"><svg viewBox="0 0 74 74"><use href="#poe"/></svg></div>
    <div class="app before-divider run"><svg viewBox="0 0 74 74"><rect width="74" height="74" rx="17" fill="url(#gNavy)"/><path d="M20 19l22 13-7 4-15-8z" fill="#4f8fe0"/><path d="M28 14L20 19 42 32 20 45l8 5 31-18z" fill="url(#gArrow)"/><path d="M20 45l8 5 31-18v9L28 58.500 20 54z" fill="url(#gEdge)"/></svg></div>
    <i class="divider"></i>
    <div class="app run"><svg viewBox="0 0 74 74"><rect width="74" height="74" rx="17" fill="#fff"/><path d="M22 12h37q2 0 2 2v10H20V14q0-2 2-2z" fill="#5ba1e6"/><path d="M20 24h41v12H20z" fill="#3e77cd"/><path d="M20 36h41v12H20z" fill="#2956b4"/><path d="M20 48h41v11q0 2-2 2H22q-2 0-2-2z" fill="#213f8a"/><rect x="7" y="23" width="28" height="28" rx="2" fill="#2250b2"/><text x="21" y="44" text-anchor="middle" class="word">W</text></svg></div>
    <div class="app run"><svg viewBox="0 0 74 74"><rect width="74" height="74" rx="17" fill="#a02317"/><path d="M17 58c-5-5 6-12 19-15s24-2 23 4-15 0-22-10-7-21-1-21 3 15-3 27-12 19-16 15z" fill="none" stroke="#fff" stroke-width="3.200"/></svg></div>
    <div class="app run"><svg viewBox="0 0 74 74"><rect width="74" height="74" rx="17" fill="#fff"/><path d="M37 9l22 13v31L37 66 15 53V22zM37 22.500L26 29v17.500L37 53l11-6.500V29z" fill="url(#gHex)" fill-rule="evenodd"/></svg></div>
    <i class="divider"></i>
    <div class="stack"><svg width="61" height="88" viewBox="0 0 61 88"><path d="M8 0h44v14H8z" fill="#dcdcdc"/><path d="M5 5h50v10H5z" fill="#efefef"/><path d="M10 4h20M8 9h22" stroke="#c9736b"/><path d="M0 10h61v77H1z" fill="#f4f4f4"/><path d="M0 10h4v77H1z" fill="#444"/><path d="M40 10h21v20z" fill="#bcbcbc"/><path d="M40 10v20h18z" fill="#fff"/><circle cx="16" cy="18" r="3" fill="#4b5f8c"/><path d="M10 24h12" stroke="#6d8298" stroke-width="2"/><path d="M15 31h31M21 35h20" stroke="#222" stroke-width="2" stroke-dasharray="3 .6"/><path d="M25 55h12M26 58.500h10" stroke="#333" stroke-width="1.600" stroke-dasharray="2.500 .6"/><path d="M20 68h22M27 71h8" stroke="#666" stroke-width="1"/></svg></div>
    <div class="trash"><svg width="65" height="82" viewBox="0 0 65 82"><path d="M0 8l10 66q2 8 22 8t23-8L65 8z" fill="url(#gTrash)"/><path d="M9 68q24 10 47 0l-1 6q-3 8-23 8t-22-8z" fill="#8a8f92" opacity=".6"/><ellipse cx="32.500" cy="8" rx="32" ry="7.500" fill="#35393c" stroke="#8e9295" stroke-width="1.500"/></svg></div>
  </footer>
</div>
</body>
</html>
```

FILE: styles.css
```css
* { box-sizing: border-box; }
body { margin: 0; background: #10150f; font-family: Inter, "Noto Sans CJK SC", sans-serif; }
svg { display: block; flex: none; overflow: visible; }
.defs { position: absolute; }
.desktop {
  width: 2940px; height: 1912px; overflow: hidden; display: flex; flex-direction: column;
  background: linear-gradient(90deg, #1a2416 0, #24301f 15%, #1b2b23 22%, #2c3a22 42%, #221812 47%, #3a271b 60%, #2a2218 64%, #1e2a1c 75%, #5c3f28 87%, #1c2622 92%, #141c20 100%);
}

.menubar {
  height: 74px; flex: none; padding-left: 38px; color: #fff; font-size: 25.4px; line-height: 30px; white-space: nowrap;
  display: grid; align-items: center;
  grid-template-columns: 70px 142px 92px 92px 92px 144px 93px 143px 119px 92px 671px 76px 84px 76px 138px 76px 76px 146px 75px 63px 60px 177px auto;
  background: linear-gradient(90deg, #54554a 0, #4f5043 35%, #45463a 64%, #414438 82%, #3b453a 100%);
  font-weight: 500; text-shadow: 0 3px 6px rgba(0,0,0,.3);
}
.menubar b, .menubar > span { margin-top: -3px; }
.menubar b { font-weight: 700; letter-spacing: .1px; }
.menubar .apple { margin-top: -4px; }
.weather, .battery { display: flex; align-items: center; gap: 8px; }
.battery { gap: 9px; font-size: 22px; }
.battery span { width: 46px; letter-spacing: -.5px; }
.du { font: italic 700 24px "Liberation Serif", serif; fill: #33342c; }
.date, .clock { font-size: 25.5px; }

.window {
  height: 1702px; flex: none; margin-top: 2px; border-radius: 22px; overflow: hidden; background: #1f2120;
  display: flex; flex-direction: column; box-shadow: 0 0 0 2px #0b0b0b;
}
.tabstrip { height: 80px; flex: none; display: flex; border-top: 2px solid #6d6d6e; border-radius: 22px 22px 0 0; padding: 10px 12px 0 42px; }
.lights { display: flex; gap: 16px; padding-top: 17px; width: 142px; }
.lights i { width: 24px; height: 24px; border-radius: 50%; }
.red { background: #ed6a5e; } .yellow { background: #f5bf4f; } .green { background: #61c554; }
.tab {
  position: relative; width: 464px; height: 68px; border-radius: 20px 20px 0 0; background: #3c3c3c; color: #e3e3e3;
  display: flex; align-items: center; padding: 0 24px 12px 16px; font-size: 23.4px; line-height: 28px;
}
.tab::before, .tab::after { content: ""; position: absolute; bottom: 0; width: 24px; height: 24px; }
.tab::before { left: -24px; background: radial-gradient(circle at 0 0, transparent 23.5px, #3c3c3c 24px); }
.tab::after { right: -24px; background: radial-gradient(circle at 100% 0, transparent 23.5px, #3c3c3c 24px); }
.tab span { margin: -2px 0 0 16px; flex: 1; white-space: nowrap; }
.newtab { margin: 17px 0 0 29px; }
.tabsearch { margin-left: auto; width: 56px; height: 56px; border-radius: 18px; background: #3c3c3c; display: grid; place-items: center; }

.chrome { height: 162px; flex: none; background: #3c3c3c; border-bottom: 2px solid #4a4a4a; border-radius: 16px 16px 0 0; }
.toolbar {
  height: 92px; padding-left: 31px; display: grid; align-items: center;
  grid-template-columns: 71px 74px 71px 65px 2172px 72px 75px 71px 66px 35px 90px auto;
}
.omnibox { width: 2136px; height: 68px; border-radius: 34px; background: #282828; display: flex; align-items: center; padding: 0 32px 0 10px; }
.siteinfo { width: 48px; height: 48px; border-radius: 50%; background: #3c3c3c; display: grid; place-items: center; }
.url { width: 1869px; margin-left: 16px; white-space: nowrap; font-size: 27.5px; color: #c7c7c7; letter-spacing: .22px; }
.url b { font-weight: 400; color: #e8e8e8; }
.omnibox > svg + svg { margin-left: 33px; }
.sep { width: 3px; height: 32px; background: #5e5e5e; border-radius: 2px; }
.bookmarks {
  height: 56px; padding-left: 38px; display: grid; align-items: center; color: #c7c7c7; font-size: 23px; line-height: 28px; white-space: nowrap;
  grid-template-columns: 59px 31px 142px 174px 228px 158px 212px 150px 116px 172px 178px 124px 186px 144px 132px 208px 158px 248px auto;
}
.bookmarks a { display: flex; align-items: center; gap: 12px; letter-spacing: .2px; }
.bookmarks .f { gap: 16px; }
.wiki { font: 25px "Liberation Serif", serif; fill: #111; }

.page { flex: 1; position: relative; display: flex; background: linear-gradient(180deg, #fff 1372px, #fbfbfb 1395px, #f2f2f2 1425px, #dcdcdc 1460px); }
.report { flex: 1; padding-left: 13px; }
h1 { margin: 43px 0 0; width: 2881px; text-align: center; font: 400 25.6px/38px Inter, "Noto Sans CJK SC", sans-serif; color: #000; }
.tablebox { margin-top: 12px; width: 2882px; height: 1280px; overflow: hidden; border: solid #ebeef5; border-width: 1px 2px 0 1px; }
table { width: 2935px; table-layout: fixed; border-collapse: separate; border-spacing: 0; color: #606266; font-size: 22.4px; line-height: 37px; }
th, td { border: solid #f2f4f9; border-width: 0 2px 2px 0; text-align: center; vertical-align: middle; white-space: nowrap; padding: 26px 0 0; font-weight: 500; }
th { height: 89px; padding: 0; background: #f2f6fd; font-weight: 700; border-color: #ebeef5; }
td:first-child { letter-spacing: -.38px; }
.first td { height: 119px; padding: 0 0 5px; }
.one td { height: 114px; }
.one.tall td { height: 115.5px; }
.two td { height: 151px; }
.two.tall td { height: 152px; }
.many td { height: 260px; padding: 26px 0 0; }
.many .reason { vertical-align: top; padding-top: 52px; }
.emblem { position: absolute; left: 878px; top: 46px; pointer-events: none; }
.mee { font: 171px "Liberation Sans", sans-serif; stroke: #cbcbcb; stroke-width: 2px; }
.scrollbar { width: 16px; background: rgba(0,0,0,.06); padding: 1051px 2px 0; }
.scrollbar i { display: block; height: 307px; border-radius: 6px; background: #c1c1c1; }

.dock {
  position: relative; height: 123px; margin: 2px 27px 0; flex: none; padding-left: 16px; border: 2px solid rgba(120,125,115,.5); border-radius: 36px;
  display: flex; align-items: flex-end;
  background: linear-gradient(90deg, #20251a 0, #1f261c 12%, #1a2120 26%, #2a3320 45%, #221f1b 52%, #26201a 68%, #20251f 76%, #262a26 88%, #3d3122 92%, #1d2222 97%);
}
.app { position: relative; width: 74px; padding-bottom: 28px; margin-right: 25.1px; flex: none; }
.app > svg { width: 100%; height: auto; }
.run::after { content: ""; position: absolute; left: calc(50% - 4px); bottom: 3px; width: 8px; height: 8px; border-radius: 50%; background: #a8ada4; }
.s82 { width: 82px; margin-left: 1px; margin-right: 29px; }
.s92 { width: 92px; margin-right: 28px; padding-bottom: 31px; }
.s97 { width: 97px; margin-right: 31px; padding-bottom: 31px; }
.s95 { width: 95px; margin-right: 31px; padding-bottom: 31px; }
.s88 { width: 88px; margin-right: 28px; padding-bottom: 30px; }
.s77 { width: 77px; margin-right: 27px; padding-bottom: 29px; }
.before-divider { margin-right: 35px; }
.divider { width: 2px; height: 90px; margin: 0 33px 15px 0; background: #62665f; flex: none; }
.divider ~ .divider { margin: 0 38px 15px 9px; }
.stack { padding-bottom: 22px; margin-right: 37px; }
.trash { padding-bottom: 24px; }
.badge { position: absolute; right: -12px; top: -10px; width: 36px; height: 36px; border-radius: 50%; background: #e04b3d; color: #fff; font-size: 20px; line-height: 36px; text-align: center; letter-spacing: -.5px; }
.tip {
  position: absolute; left: -10px; bottom: 165px; width: 111px; height: 55px; border: 2px solid #0a0a0a; border-radius: 9px;
  background: #646462; box-shadow: inset 0 0 0 2px #7e7e7c; color: #fff; font-size: 27px; line-height: 52px; text-align: center;
}
.tip::before, .tip::after { content: ""; position: absolute; left: 39px; top: 51px; border: solid transparent; border-width: 18px 15px 0; border-top-color: #0a0a0a; }
.tip::after { left: 42px; top: 50px; border-width: 15px 12px 0; border-top-color: #646462; }
.tiny { font: 7px Inter, sans-serif; fill: #fff; letter-spacing: -.6px; }
.lite { font: 700 8px Inter, sans-serif; fill: #5c3a10; }
.aa { font: 700 38px "Liberation Serif", serif; fill: #f2f5f7; }
.petals rect { mix-blend-mode: multiply; opacity: .92; }
.calm { font: 500 14px Inter, "Noto Sans CJK SC", sans-serif; fill: #fff; }
.cald { font: 300 41px Inter, sans-serif; fill: #2a2a2a; letter-spacing: -1px; }
.typora { font: 56px "Liberation Serif", serif; fill: #222; stroke: #222; stroke-width: 1.5px; }
.tv { font: 500 38px Inter, sans-serif; fill: #fff; letter-spacing: -1px; }
.word { font: 700 19px Inter, sans-serif; fill: #fff; }
```
